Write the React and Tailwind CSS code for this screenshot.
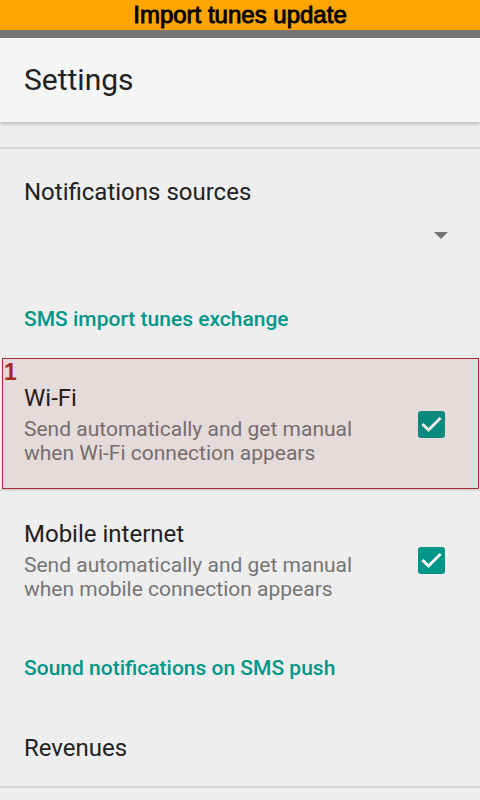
import React from "react";

function Check() {
  return (
    <div className="w-[27px] h-[27px] rounded-[3px] bg-[#009688] shrink-0 flex items-center justify-center">
      <svg width="27" height="27" viewBox="0 0 27 27">
        <polyline points="5.5,14 10.5,19 21.5,8" fill="none" stroke="#ffffff" strokeWidth="3" strokeLinecap="square" />
      </svg>
    </div>
  );
}

function Row({ title, sub1, sub2, pt }) {
  return (
    <div className={`flex items-center pl-6 pr-[35px] ${pt}`}>
      <div className="flex-1">
        <div className="text-[24px] leading-[28px] text-[#212121]">{title}</div>
        <div className="mt-[5px] text-[21px] leading-[24px] text-[#757575]">
          <div>{sub1}</div>
          <div>{sub2}</div>
        </div>
      </div>
      <Check />
    </div>
  );
}

export default function App() {
  return (
    <div className="w-[480px] h-[800px] overflow-hidden bg-[#eeeeee] font-['Roboto',sans-serif]">
      <div className="h-[30px] bg-[#ffa500] flex items-center justify-center font-['Liberation_Sans',Arial,sans-serif] text-[24px] leading-none text-black [-webkit-text-stroke:0.9px_black]">
        Import tunes update
      </div>
      <div className="h-[8px] bg-[#757575]" />
      <div className="relative z-10 h-[84px] bg-[#f5f5f5] flex items-center pl-6 shadow-[0_2px_4px_rgba(0,0,0,0.22)]">
        <span className="text-[30px] leading-[36px] text-[#212121]">Settings</span>
      </div>
      <div className="h-[25px]" />
      <div className="h-[2px] bg-[#d6d6d6]" />

      <div className="pt-[29px] pl-6">
        <div className="text-[24px] leading-[28px] text-[#212121]">Notifications sources</div>
      </div>
      <div className="mt-[5px] h-[48px] flex items-center justify-end pr-[32px]">
        <svg width="14" height="7" viewBox="0 0 14 7">
          <polygon points="0,0 14,0 7,7" fill="#757575" />
        </svg>
      </div>

      <div className="mt-[48px] pl-6 text-[21px] leading-[24px] font-medium text-[#009688]">
        SMS import tunes exchange
      </div>

      <div className="relative mt-[27px] h-[131px]">
        <div className="h-full pt-[1px]">
          <Row
            title="Wi-Fi"
            sub1="Send automatically and get manual"
            sub2="when Wi-Fi connection appears"
            pt="h-full"
          />
        </div>
        <div className="absolute left-[2px] right-[1px] inset-y-0 border border-[#a52a2a] bg-[#800000]/[0.08]">
          <span className="absolute left-[1px] top-[2px] font-['Liberation_Sans',Arial,sans-serif] font-bold text-[23px] leading-none text-[#a52a2a]">
            1
          </span>
        </div>
      </div>
      <div className="h-[2px] bg-[#d6d6d6]" />

      <Row
        title="Mobile internet"
        sub1="Send automatically and get manual"
        sub2="when mobile connection appears"
        pt="pt-[29px]"
      />

      <div className="mt-[55px] pl-6 text-[21px] leading-[24px] font-medium text-[#009688]">
        Sound notifications on SMS push
      </div>

      <div className="mt-[54px] pl-6 text-[24px] leading-[28px] text-[#212121]">Revenues</div>
      <div className="mt-[24px] h-[2px] bg-[#d6d6d6]" />
    </div>
  );
}
